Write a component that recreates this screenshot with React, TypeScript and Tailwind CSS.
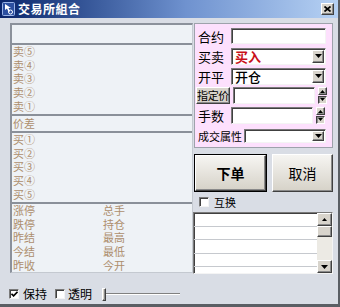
import React from 'react';

const sunken =
  'border border-t-[#7a7a7a] border-l-[#7a7a7a] border-r-[#f4f4f4] border-b-[#f4f4f4] shadow-[inset_1px_1px_0_#404040]';
const raised =
  'bg-[#d8d4cc] border border-t-white border-l-white border-r-[#404040] border-b-[#404040] shadow-[inset_-1px_-1px_0_#8a8a8a]';

function ArrowDown() {
  return (
    <svg width="7" height="4" viewBox="0 0 7 4">
      <path d="M0 0h7L3.5 4z" fill="#000" />
    </svg>
  );
}

function ArrowUp() {
  return (
    <svg width="5" height="3" viewBox="0 0 5 3">
      <path d="M0 3h5L2.5 0z" fill="#000" />
    </svg>
  );
}

function DropBtn() {
  return (
    <div className={`${raised} w-[12px] h-full flex items-center justify-center shrink-0`}>
      <ArrowDown />
    </div>
  );
}

function Select({ children, w = 'w-[95px]', h = 'h-[17px]' }: { children?: React.ReactNode; w?: string; h?: string }) {
  return (
    <div className={`${sunken} ${w} ${h} bg-white flex items-stretch pr-px py-px`}>
      <div className="flex-1 flex items-center pl-[3px] whitespace-nowrap">{children}</div>
      <DropBtn />
    </div>
  );
}

function Spin() {
  return (
    <div className="w-[9px] h-[17px] flex flex-col gap-px ml-[3px]">
      <div className={`${raised} flex-1 flex items-center justify-center`}>
        <ArrowUp />
      </div>
      <div className={`${raised} flex-1 flex items-center justify-center rotate-180`}>
        <ArrowUp />
      </div>
    </div>
  );
}

function Check({ checked }: { checked?: boolean }) {
  return (
    <div className={`${sunken} w-[10px] h-[10px] bg-white flex items-center justify-center shrink-0`}>
      {checked && (
        <svg width="7" height="6" viewBox="0 0 7 6">
          <path d="M0.5 2.8L2.6 4.9L6.5 0.8" stroke="#000" strokeWidth="1.6" fill="none" />
        </svg>
      )}
    </div>
  );
}

const sell = ['卖⑤', '卖④', '卖③', '卖②', '卖①'];
const buy = ['买①', '买②', '买③', '买④', '买⑤'];
const stats = [
  ['涨停', '总手'],
  ['跌停', '持仓'],
  ['昨结', '最高'],
  ['今结', '最低'],
  ['昨收', '今开'],
];

function Row({ text }: { text: string }) {
  return <div className="h-[13.6px] flex items-center pl-px">{text}</div>;
}

export default function App() {
  return (
    <div className="w-[340px] h-[307px] bg-[#d9dde5] flex flex-col overflow-hidden border-r-2 border-b-[3px] border-[#5a5e64] font-['Noto_Sans_CJK_SC','Noto_Sans',sans-serif] text-[12px] leading-none select-none">
      {/* title bar */}
      <div className="h-[18px] shrink-0 bg-linear-to-r from-[#0a246a] via-[#6f92cf] via-55% to-[#b6d1f3] flex items-center pl-[2px] pr-[4px]">
        <svg width="13" height="14" viewBox="0 0 13 14" className="shrink-0">
          <rect x="0.5" y="0.5" width="12" height="13" rx="1" fill="#2c4fa0" stroke="#9ab4e8" />
          <path d="M3 2v6l2-1.5 1.5 3.5 1.5-.7L6.5 6H9z" fill="#fff" />
          <circle cx="8.5" cy="10" r="2" fill="none" stroke="#fff" strokeWidth="1" />
        </svg>
        <span className="ml-[3px] text-white font-bold text-[12px] tracking-[0.5px]">交易所組合</span>
        <div className="flex-1" />
        <div className={`${raised} w-[13px] h-[12px] flex items-center justify-center`}>
          <svg width="7" height="6" viewBox="0 0 7 6">
            <path d="M0.5 0.5L6.5 5.5M6.5 0.5L0.5 5.5" stroke="#000" strokeWidth="1.7" />
          </svg>
        </div>
      </div>

      {/* body */}
      <div className="flex pl-[10px] pt-[5px] gap-px">
        {/* left quote panel */}
        <div className="w-[183px] h-[250px] bg-[#eef2f6] border-t-2 border-l-2 border-r border-b border-t-[#8b919b] border-l-[#8b919b] border-r-[#c4c9d0] border-b-[#c4c9d0] flex flex-col text-[#ad8e6d] text-[11px]">
          <div className="h-[20px] shrink-0 border-b-2 border-[#8a9099]" />
          <div className="shrink-0 border-b-2 border-[#8a9099] pb-px">
            {sell.map((s) => (
              <Row key={s} text={s} />
            ))}
          </div>
          <div className="h-[17px] shrink-0 flex items-center pl-px border-b-2 border-[#8a9099]">价差</div>
          <div className="shrink-0 border-b-2 border-[#8a9099] pb-px">
            {buy.map((s) => (
              <Row key={s} text={s} />
            ))}
          </div>
          <div className="flex-1">
            {stats.map(([a, b]) => (
              <div key={a} className="h-[13.6px] flex items-center pl-px">
                <span className="w-[90px]">{a}</span>
                <span>{b}</span>
              </div>
            ))}
          </div>
        </div>

        {/* right column */}
        <div className="w-[139px] flex flex-col">
          <div className="h-[125px] bg-[#fde0fd] border border-[#9ea2ab] flex flex-col pt-[4px] pl-[3px] text-[13px] text-black">
            <div className="h-[20px] flex items-start">
              <span className="w-[33px] h-[16px] flex items-center">合约</span>
              <div className={`${sunken} w-[95px] h-[16px] bg-white`} />
            </div>
            <div className="h-[20px] flex items-start">
              <span className="w-[33px] h-[17px] flex items-center">买卖</span>
              <Select>
                <span className="text-[#c8101a] font-bold text-[13px]">买入</span>
              </Select>
            </div>
            <div className="h-[20px] flex items-start">
              <span className="w-[33px] h-[17px] flex items-center">开平</span>
              <Select>
                <span className="text-black font-medium text-[13px]">开仓</span>
              </Select>
            </div>
            <div className="h-[20px] flex items-start -ml-[2px]">
              <div className={`${raised} w-[34px] h-[17px] flex items-center justify-center text-[11px] whitespace-nowrap tracking-[-0.3px] mr-[3px]`}>
                指定价
              </div>
              <div className={`${sunken} w-[82px] h-[17px] bg-white`} />
              <Spin />
            </div>
            <div className="h-[20px] flex items-start">
              <span className="w-[33px] h-[17px] flex items-center">手数</span>
              <div className={`${sunken} w-[82px] h-[17px] bg-white`} />
              <Spin />
            </div>
            <div className="h-[20px] flex items-center pb-[2px]">
              <span className="w-[46px] text-[11px] whitespace-nowrap">成交属性</span>
              <Select w="w-[82px]" h="h-[14px]" />
            </div>
          </div>

          <div className="flex mt-[6px] h-[38px] gap-[5px]">
            <div className="w-[73px] border border-black">
              <div className={`${raised} h-full bg-linear-to-b from-[#f6f5f2] to-[#d6d2c8] flex items-center justify-center text-[14px] font-bold`}>
                下单
              </div>
            </div>
            <div className={`${raised} w-[61px] bg-linear-to-b from-[#f6f5f2] to-[#d6d2c8] flex items-center justify-center text-[14px]`}>
              取消
            </div>
          </div>

          <div className="flex items-center h-[14px] mt-[3px] pl-[5px] gap-[5px] text-[11px]">
            <Check />
            <span>互换</span>
          </div>

          <div className={`${sunken} mt-[3px] h-[62px] bg-white flex -ml-px`}>
            <div className="flex-1 flex flex-col">
              {[0, 1, 2, 3].map((i) => (
                <div key={i} className="h-[13.5px] shrink-0 border-b border-[#c6c9ce]" />
              ))}
            </div>
            <div className="w-[15px] bg-[#eceae4] flex flex-col">
              <div className={`${raised} h-[13px] flex items-center justify-center`}>
                <ArrowUp />
              </div>
              <div className={`${raised} h-[11px]`} />
              <div className="flex-1" />
              <div className={`${raised} h-[13px] flex items-center justify-center`}>
                <ArrowDown />
              </div>
            </div>
          </div>
        </div>
      </div>

      {/* bottom bar */}
      <div className="flex items-center mt-[13px] pl-[9px] h-[14px] text-[12px] text-black">
        <Check checked />
        <span className="ml-[4px]">保持</span>
        <div className="ml-[8px]">
          <Check />
        </div>
        <span className="ml-[3px]">透明</span>
        <div className="ml-[10px] flex items-center">
          <div className={`${raised} w-[4px] h-[13px]`} />
          <div className="w-[74px] h-[2px] border-t border-[#808080] border-b border-b-white" />
        </div>
      </div>
    </div>
  );
}
